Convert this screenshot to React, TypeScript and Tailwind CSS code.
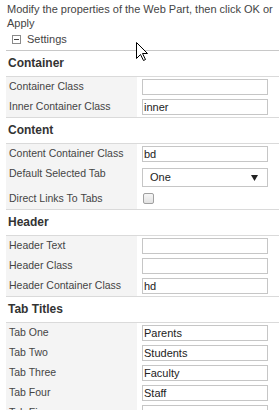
import React from "react";

const font = { fontFamily: '"Liberation Sans", Arial, sans-serif' };

function Input({ value = "" }: { value?: string }) {
  return (
    <div className="mt-[2px] h-[16px] w-[126px] border border-[#c6c6c6] bg-white pl-[1px] text-[11px] leading-[14px] text-[#222]">
      {value}
    </div>
  );
}

function Row({ label, children, h = "h-[20px]" }: { label: string; children: React.ReactNode; h?: string }) {
  return (
    <div className={`flex ${h}`}>
      <div className="w-[131px] shrink-0 bg-[#f4f4f4] pl-[3px] pt-[2px] text-[10.5px] leading-[14px] text-[#444]">
        {label}
      </div>
      <div className="flex-1 pl-[5px]">{children}</div>
    </div>
  );
}

function Section({ title, children }: { title: string; children: React.ReactNode }) {
  return (
    <div>
      <div className="h-[25px] pl-[2px] pt-[4px] text-[12px] font-bold leading-[16px] text-[#333]">{title}</div>
      <div className="border-y border-[#dadada]">{children}</div>
    </div>
  );
}

export default function App() {
  return (
    <div className="relative h-[410px] w-[279px] overflow-hidden bg-white" style={font}>
      <div className="pl-[7px] pt-[2px] text-[11px] leading-[14px] text-[#444]">
        Modify the properties of the Web Part, then click OK or Apply
      </div>
      <div className="mt-[1px] flex h-[16px] items-center pl-[12px] text-[11px] text-[#444]">
        <div className="flex h-[9px] w-[9px] items-center justify-center border border-[#8a8a8a] bg-white">
          <div className="h-[1px] w-[5px] bg-[#444]" />
        </div>
        <span className="ml-[6px] leading-[14px]">Settings</span>
      </div>
      <div className="ml-[6px] mt-[3px] h-px bg-[#c8c8c8]" />
      <div className="pl-[6px]">
        <Section title="Container">
          <Row label="Container Class"><Input /></Row>
          <Row label="Inner Container Class"><Input value="inner" /></Row>
        </Section>
        <Section title="Content">
          <Row label="Content Container Class"><Input value="bd" /></Row>
          <Row label="Default Selected Tab" h="h-[25px]">
            <div className="mt-[4px] flex h-[19px] w-[126px] items-center justify-between border border-[#c6c6c6] bg-white pl-[7px] pr-[9px] text-[11px] text-[#222]">
              <span>One</span>
              <svg width="7" height="6" viewBox="0 0 7 6"><path d="M0 0 H7 L3.5 6 Z" fill="#222" /></svg>
            </div>
          </Row>
          <Row label="Direct Links To Tabs">
            <div className="ml-[1px] mt-[4px] h-[11px] w-[11px] rounded-[2px] border border-[#a0a0a0] bg-gradient-to-b from-[#f6f6f6] to-[#e2e2e2]" />
          </Row>
        </Section>
        <Section title="Header">
          <Row label="Header Text"><Input /></Row>
          <Row label="Header Class"><Input /></Row>
          <Row label="Header Container Class"><Input value="hd" /></Row>
        </Section>
        <Section title="Tab Titles">
          <Row label="Tab One"><Input value="Parents" /></Row>
          <Row label="Tab Two"><Input value="Students" /></Row>
          <Row label="Tab Three"><Input value="Faculty" /></Row>
          <Row label="Tab Four"><Input value="Staff" /></Row>
          <Row label="Tab Five"><Input /></Row>
        </Section>
      </div>
      <svg className="absolute left-[136px] top-[42px]" width="13" height="20" viewBox="0 0 13 20">
        <path d="M0.5 0.5 L0.5 16.5 L4.5 12.5 L7.5 18.5 L9.5 17.5 L6.5 11.5 L11.5 11.5 Z" fill="#fff" stroke="#000" strokeWidth="1" strokeLinejoin="miter" />
      </svg>
    </div>
  );
}
